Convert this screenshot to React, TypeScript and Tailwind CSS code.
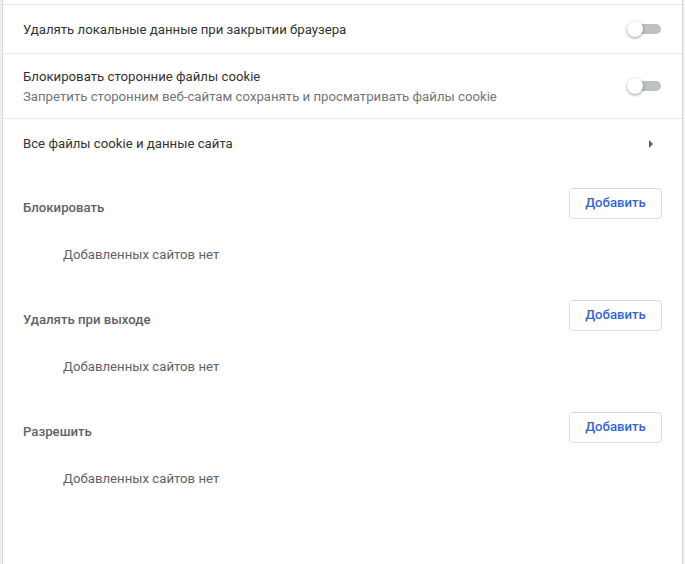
const font = { fontFamily: 'Roboto, "Noto Sans", sans-serif' }

function Toggle() {
  return (
    <div className="relative h-[10px] w-[32px]">
      <div className="absolute inset-0 rounded-full bg-[#bdc1c6]" />
      <div className="absolute -left-[2px] -top-[3px] h-[16px] w-[16px] rounded-full bg-white shadow-[0_1px_3px_rgba(0,0,0,0.4)]" />
    </div>
  )
}

function Section({ title }: { title: string }) {
  return (
    <div className="pb-2">
      <div className="flex h-[56px] items-center justify-between pl-5 pr-5">
        <span className="text-[13.2px] font-medium text-[#5f6368] pt-[10px]">{title}</span>
        <button className="h-[31px] w-[93px] rounded-[4px] border border-[#dadce0] bg-white text-[13.2px] font-medium text-[#3367d6]">
          Добавить
        </button>
      </div>
      <div className="flex h-[48px] items-center pl-[60px] text-[13.2px] text-[#5f6368]">
        Добавленных сайтов нет
      </div>
    </div>
  )
}

export default function App() {
  return (
    <div className="h-[564px] w-[685px] overflow-hidden bg-[#f1f1f1] pl-[2px] pr-[2px]" style={font}>
      <div className="h-full border-x border-[#d6d6d6] bg-white">
        <div className="h-[5px] border-b border-[#e8e8e8]" />
        <div className="flex h-[49px] items-center justify-between border-b border-[#e8e8e8] pl-5 pr-[21px]">
          <span className="pt-[2px] text-[13.2px] text-[#333]">Удалять локальные данные при закрытии браузера</span>
          <Toggle />
        </div>
        <div className="flex h-[65px] items-center justify-between border-b border-[#e8e8e8] pl-5 pr-[21px]">
          <div className="flex flex-col pt-[2px]">
            <span className="text-[13.2px] leading-[20px] text-[#333]">Блокировать сторонние файлы cookie</span>
            <span className="text-[13.2px] leading-[20px] text-[#757575]">
              Запретить сторонним веб-сайтам сохранять и просматривать файлы cookie
            </span>
          </div>
          <Toggle />
        </div>
        <div className="flex h-[48px] items-center justify-between pl-5 pr-[28px]">
          <span className="pt-[2px] text-[13.2px] text-[#333]">Все файлы cookie и данные сайта</span>
          <svg width="6" height="10" viewBox="0 0 6 10" className="mt-[2px]">
            <path d="M1 1 L5 5 L1 9 Z" fill="#5f6368" />
          </svg>
        </div>
        <div className="pt-[8px]">
          <Section title="Блокировать" />
          <Section title="Удалять при выходе" />
          <Section title="Разрешить" />
        </div>
      </div>
    </div>
  )
}
